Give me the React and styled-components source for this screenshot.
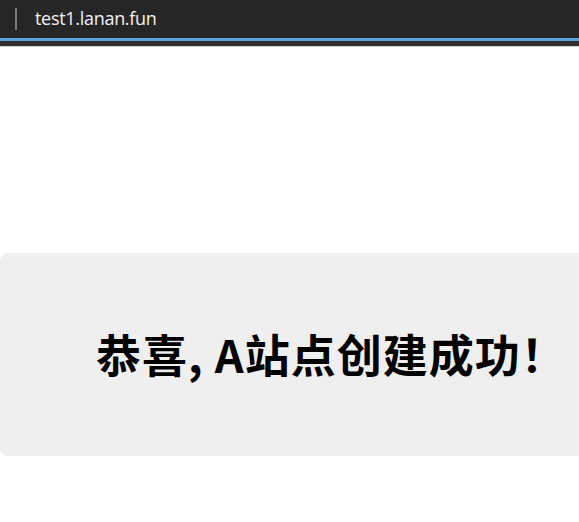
import React from "react";
import styled, { createGlobalStyle } from "styled-components";

const GlobalStyle = createGlobalStyle`
  html, body { margin: 0; padding: 0; background: #ffffff; }
  body { font-family: "Noto Sans", "Noto Sans CJK SC", sans-serif; overflow: hidden; }
`;

const Page = styled.div`
  width: 579px;
  height: 522px;
  display: flex;
  flex-direction: column;
  background: #ffffff;
  overflow: hidden;
`;

const TitleBar = styled.header`
  height: 38px;
  background: #262626;
  display: flex;
  align-items: center;
  padding-left: 15px;
  gap: 18px;
  border-bottom: 3px solid #5ba3dc;
`;

const Divider = styled.span`
  width: 2px;
  height: 22px;
  background: #7a7a7a;
`;

const Url = styled.span`
  font-family: "Open Sans", "Noto Sans", sans-serif;
  font-size: 18px;
  letter-spacing: -0.3px;
  color: #f2f2f2;
  margin-top: -2px;
`;

const Shade = styled.div`
  height: 5px;
  background: #2f2f2f;
  border-bottom: 1px solid #d6d6d6;
`;

const Body = styled.main`
  flex: 1;
  display: flex;
  flex-direction: column;
  padding-top: 206px;
`;

const Banner = styled.section`
  margin-right: -40px;
  height: 203px;
  background: #efefef;
  border-radius: 8px;
  display: flex;
  align-items: center;
  padding-left: 96px;
`;

const Title = styled.h1`
  margin: 0;
  margin-top: -3px;
  font-family: "Noto Sans CJK SC", "Noto Sans", sans-serif;
  font-weight: 700;
  font-size: 45px;
  letter-spacing: 1px;
  color: #000000;
  white-space: nowrap;
`;

export default function App() {
  return (
    <Page>
      <GlobalStyle />
      <TitleBar>
        <Divider />
        <Url>test1.lanan.fun</Url>
      </TitleBar>
      <Shade />
      <Body>
        <Banner>
          <Title>恭喜, A站点创建成功！</Title>
        </Banner>
      </Body>
    </Page>
  );
}
